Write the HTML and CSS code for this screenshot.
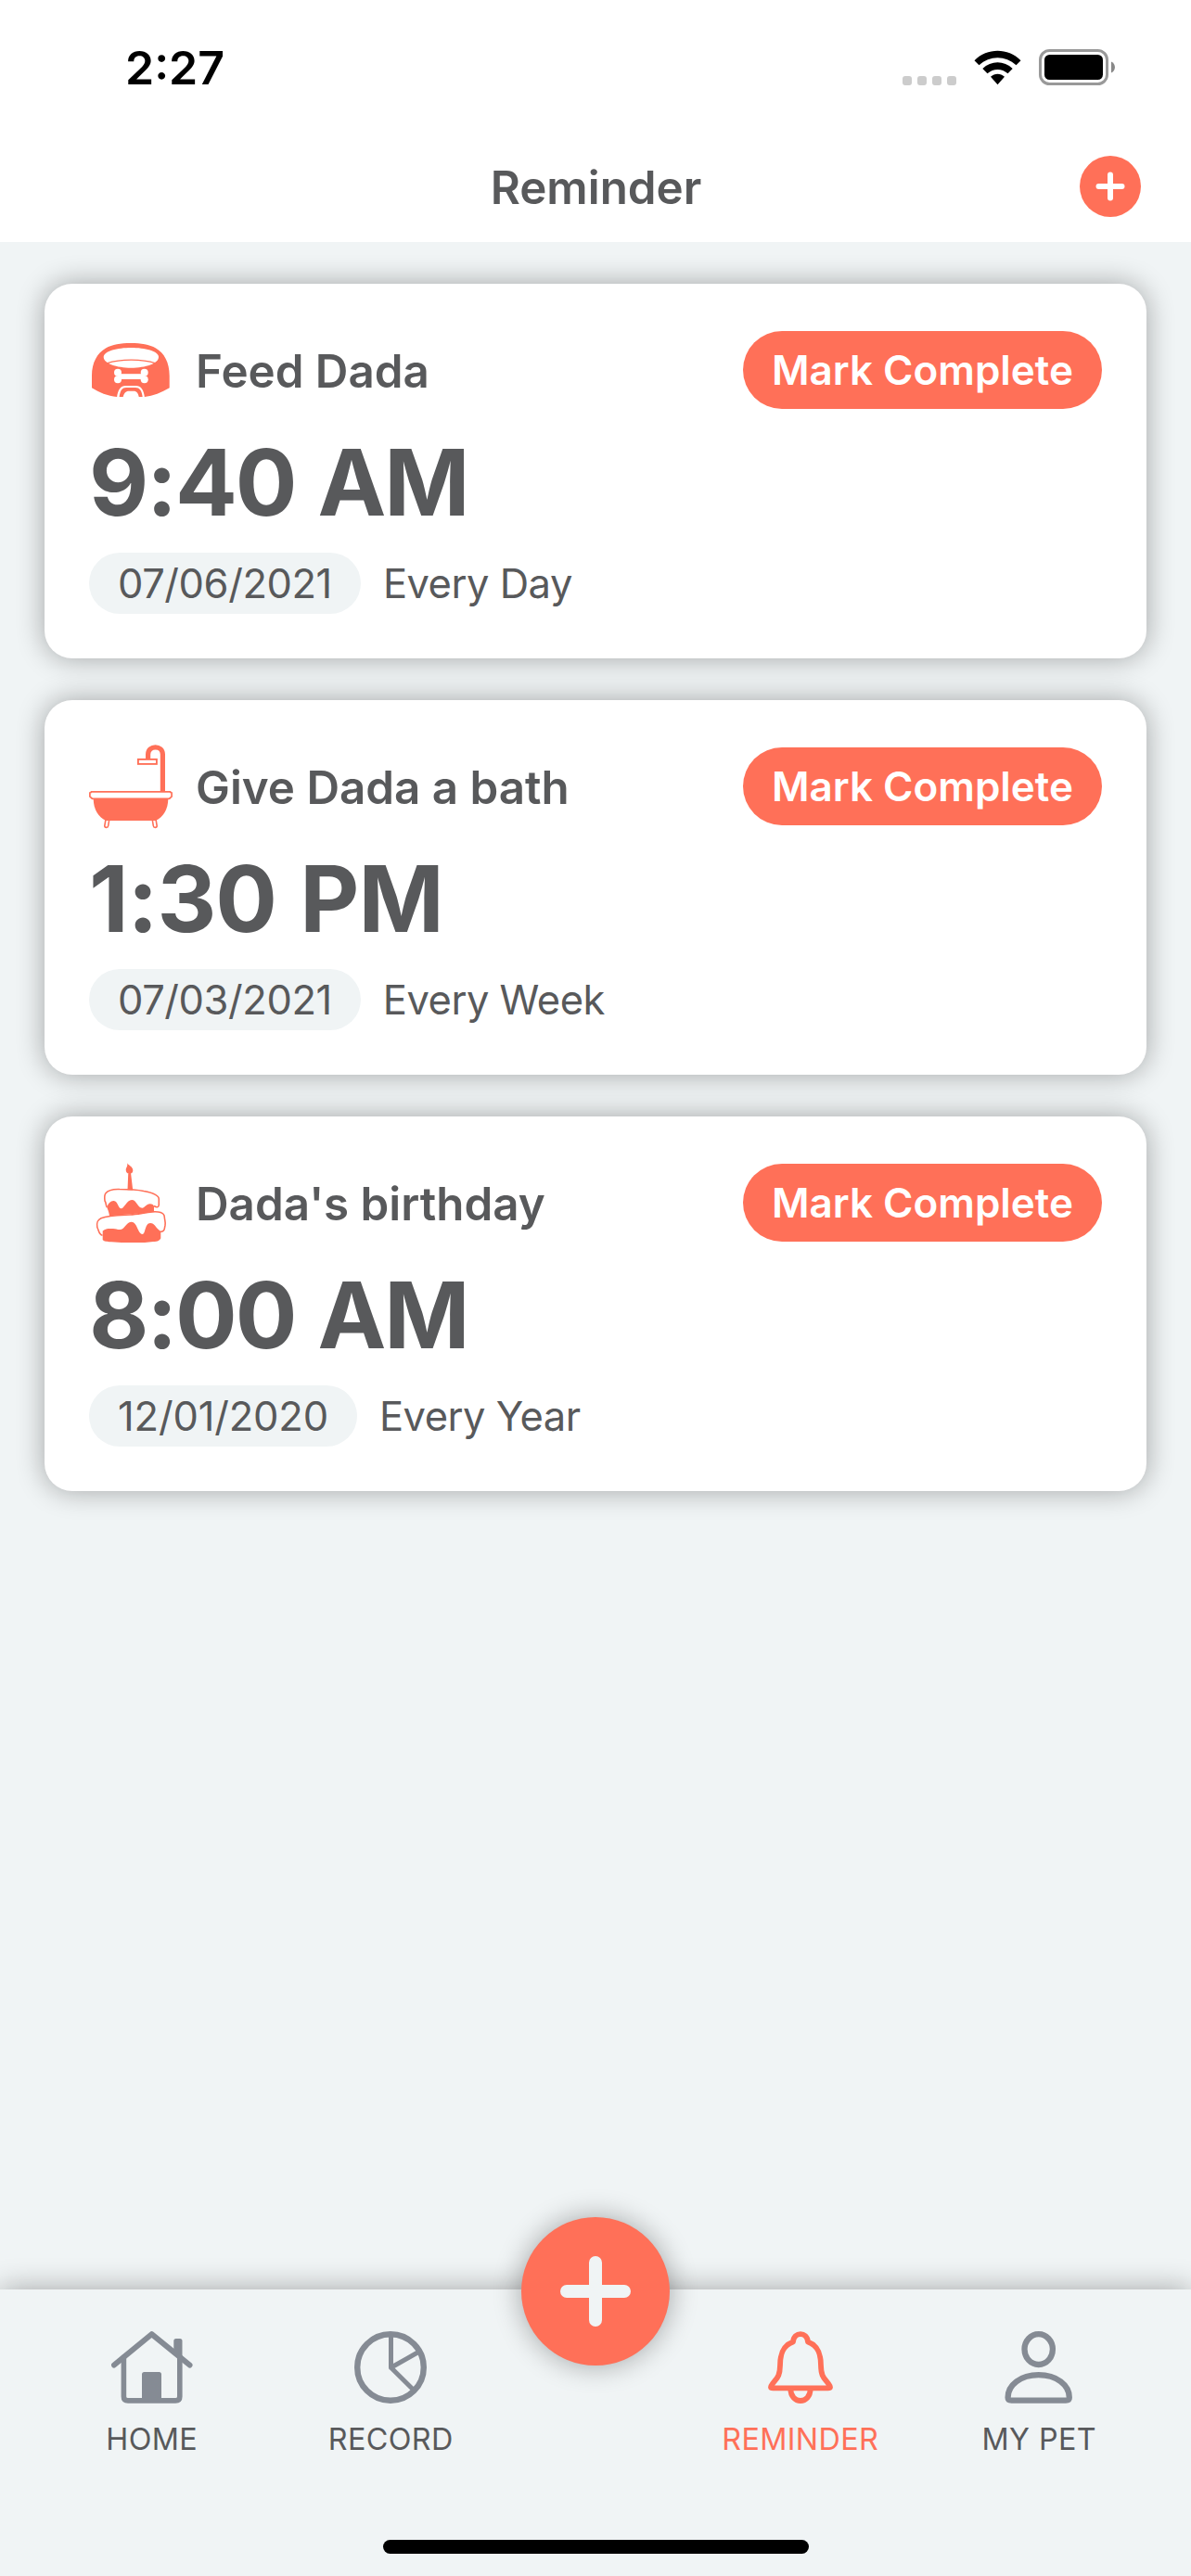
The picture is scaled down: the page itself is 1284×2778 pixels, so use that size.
FILE: index.html
```html
<!DOCTYPE html>
<html lang="en">
<head>
<meta charset="utf-8">
<title>Reminder</title>
<link rel="stylesheet" href="styles.css">
</head>
<body>
<div class="screen">
  <div class="status-bar">
    <span class="clock">2:27</span>
    <div class="status-icons">
      <svg class="signal" width="58" height="38" viewBox="0 0 58 38" fill="#ccc"><rect y="28" width="10" height="10" rx="3"/><rect x="16" y="28" width="10" height="10" rx="3"/><rect x="32" y="28" width="10" height="10" rx="3"/><rect x="48" y="28" width="10" height="10" rx="3"/></svg>
      <svg class="wifi" width="51" height="38" viewBox="0 0 51 38"><path d="M.5 11.2C14.500-2.700 36.500-2.700 50.500 11.200L45.500 16.200C34 5.500 17 5.500 5.500 16.200ZM9.300 20C18.500 11 32.500 11 41.700 20L36.500 25.200C30 19.500 21 19.500 14.500 25.200ZM18 28.700C22.500 24.800 28.500 24.800 33 28.700L25.500 37.300Z"/></svg>
      <svg class="battery" width="83" height="39" viewBox="0 0 83 39"><rect x="1.500" y="1.500" width="72" height="36" rx="10" fill="none" stroke="#999" stroke-width="3"/><rect x="6" y="6" width="63" height="27" rx="5.500"/><path d="M78 13.500C83.300 15.500 83.300 23.500 78 25.500Z" fill="#888"/></svg>
    </div>
  </div>

  <header class="header">
    <h1 class="header-title">Reminder</h1>
    <button class="add-button" aria-label="Add"><svg width="66" height="66" viewBox="0 0 66 66" fill="none" stroke="#fff" stroke-width="6" stroke-linecap="round"><path d="M33 20.500V45.500M20.500 33H45.500"/></svg></button>
  </header>

  <main class="list">
    <article class="card">
      <div class="card-head">
        <svg class="card-icon" viewBox="0 0 90 90">
          <path fill="#ff7058" d="M3 64.300V51C3 37 9 26.500 18 21.500C25 17.500 34 16 45 16S65 17.500 72 21.500C81 26.500 86.700 37 86.700 51V64.300C78 69.500 69 73 60 74H30C20 73 11 69.500 3 64.300Z"/>
          <path fill="#fff" d="M45.300 21C60 21 75 24.500 75 31C75 38 61 42.700 45.300 42.700S15.700 38 15.700 31C15.700 24.500 31 21 45.300 21Z"/>
          <path fill="none" stroke="#ff7058" stroke-width="1.300" d="M19 37.800C34 32.900 57 32.900 72 37.800"/>
          <g fill="#fff"><circle cx="31" cy="47.700" r="4"/><circle cx="31" cy="55.300" r="4"/><circle cx="59.700" cy="47.700" r="4"/><circle cx="59.700" cy="55.300" r="4"/><path d="M31 49.200H60V55H31Z"/><path d="M30 75C31 66 34 62 39.500 62H50.500C56 62 59 66 60 75H57.800C57 67 54.500 63.900 50 63.900H40C35.500 63.900 33.500 67 32.500 75ZM36.500 75C37.500 70 39.500 67.700 43 67.700H48C51.500 67.700 53 70 54 75Z"/></g>
        </svg>
        <h2 class="card-title">Feed Dada</h2>
        <button class="complete">Mark Complete</button>
      </div>
      <div class="time">9:40 AM</div>
      <div class="meta"><span class="date">07/06/2021</span><span class="repeat">Every Day</span></div>
    </article>

    <article class="card">
      <div class="card-head">
        <svg class="card-icon" viewBox="0 0 90 90">
          <path fill="none" stroke="#ff7058" stroke-width="5.200" d="M63.600 15.500V10.500C63.600 .200 79.400 .200 79.400 10.500V51"/>
          <rect x="52.900" y="15.900" width="20" height="5" fill="#fff" stroke="#ff7058" stroke-width="1.900"/>
          <g fill="#fff" stroke="#ff7058" stroke-width="1.600"><path d="M18 80.500L16.800 87.500C16.800 90 20.400 90 20.700 87.500L21.800 80.500ZM72 80.500L73.200 87.500C73.200 90 69.600 90 69.300 87.500L68.200 80.500Z"/></g>
          <path fill="#ff7058" d="M4.700 58H85.300C85.300 70 80 78 72 82H18C10 78 4.700 70 4.700 58Z"/>
          <path fill="#fff" stroke="#ff7058" stroke-width="1.700" d="M2.500 50.800H87.500C87.500 51.900 89.100 52 89.100 52V56C87.500 57 87.300 58.400 86 58.400H4C2.700 58.400 2.500 57 .900 56V52C.900 52 2.500 51.900 2.500 50.800Z"/>
        </svg>
        <h2 class="card-title">Give Dada a bath</h2>
        <button class="complete">Mark Complete</button>
      </div>
      <div class="time time-narrow">1:30 PM</div>
      <div class="meta"><span class="date">07/03/2021</span><span class="repeat">Every Week</span></div>
    </article>

    <article class="card">
      <div class="card-head">
        <svg class="card-icon" viewBox="0 8 90 90">
          <path fill="#ff7058" d="M41 10C42 12.500 47.300 14 47.300 18C47.300 21 45.500 21.700 43.500 21.700S39.700 20.500 39.700 17.500C39.700 15 42.200 14 41 10ZM42.300 20.500H45L47.200 39.500L41.500 39.200Z"/>
          <path fill="#ff7058" d="M19.300 58C20.500 53.500 24 50.300 27.500 51.200C31 52 31.500 59 34.500 59.300C38 59.500 40.500 50 46 50S52 58.500 57.300 58.700C60 58.700 61.500 54.300 65.700 54.200C68 54.200 70 55.500 70 57V63L22 67.200C21.500 63 20 60 19.300 58Z"/>
          <path fill="none" stroke="#ff7058" stroke-width="1.600" d="M19.500 58C17.500 55.500 19 54 17 51C16.500 47 16.500 44.500 18 42.800C21 39 26 38.200 33 38.500C42 38.500 51 38.800 59 40.500C68 42.200 75.300 45 75.300 49V55.500C75 58 73 58.500 70 56.500"/>
          <path fill="none" stroke="#ff7058" stroke-width="1.600" d="M14.500 88.200C10.500 87.500 11 84 8.800 79.500C8 74 9 71.500 13 69.700C21 66.500 33 66.500 44 66C53 65.500 60 63.500 68 62.900C75 62.500 81 63 81.300 68.500C81.500 72 82.700 74 82 77.500C81 81 82 84.500 76.500 84.500"/>
          <path fill="#ff7058" d="M14.700 93V83.500C18 80.500 21 81 26 81C30 81 31.500 83 35.500 81.500C39 80 41 73.800 45.700 73.800C52 73.800 52.500 86.500 57.500 87C61 87 60 75 66 75C71 75 71 79.500 77.300 84V91.500C75.500 94.500 73 95 67 95.200L60 96H35L24 95.200C18 95 17 95 14.700 93Z"/>
        </svg>
        <h2 class="card-title">Dada's birthday</h2>
        <button class="complete">Mark Complete</button>
      </div>
      <div class="time">8:00 AM</div>
      <div class="meta"><span class="date date-short">12/01/2020</span><span class="repeat">Every Year</span></div>
    </article>
  </main>

  <nav class="tab-bar">
    <a class="tab">
      <svg width="88" height="78" viewBox="0 0 88 78" fill="none" stroke="#858b94" stroke-width="5.600" stroke-linecap="round" stroke-linejoin="round"><path stroke-width="6" d="M3 36.500L43.500 3.200L84.500 36.500"/><path d="M13.400 28V70.500Q13.400 74.900 18 74.900H69.200Q73.800 74.900 73.800 70.500V28"/><path fill="#858b94" stroke="none" d="M33 76V46.500Q33 44 35.500 44H51.500Q54 44 54 46.500V76ZM67.300 20V10.500Q67.300 8 69.800 8H74Q76.500 8 76.500 10.500V31Z"/></svg>
      <span>HOME</span>
    </a>
    <a class="tab">
      <svg width="78" height="78" viewBox="0 0 78 78" fill="none" stroke="#858b94" stroke-width="5"><circle cx="39" cy="39" r="35.800" stroke-width="6.400"/><path stroke-linejoin="round" d="M39.500 4V39.300L69.500 22.300M39.500 39.300L64.500 64"/></svg>
      <span>RECORD</span>
    </a>
    <a class="tab tab-right tab-active">
      <svg width="70" height="78" viewBox="0 0 70 78" fill="none" stroke="#ff7058" stroke-width="5.800" stroke-linejoin="round"><path d="M27 11.500C28 0.300 42 0.300 43 11.500C54 15.500 57 24.500 57 37C57.200 49 60.500 50.500 65 56.500C68 60.500 67.500 61.300 64.500 61.300H5.500C2.500 61.300 2 60.500 5 56.500C9.500 50.500 12.800 49 13 37C13 24.500 16 15.500 27 11.500Z"/><path d="M24.300 62C24.300 79.300 45.700 79.300 45.700 62"/></svg>
      <span>REMINDER</span>
    </a>
    <a class="tab">
      <svg width="74" height="78" viewBox="0 0 74 78" fill="none" stroke="#858b94" stroke-width="6.300"><ellipse cx="36.700" cy="19.600" rx="15.200" ry="16.400"/><path d="M7.500 74.600H66Q69.800 74.600 69.800 71.500C69.800 58 56 47.200 36.700 47.200S3.600 58 3.600 71.500Q3.600 74.600 7.500 74.600Z"/></svg>
      <span>MY PET</span>
    </a>
    <button class="fab" aria-label="New record"><svg width="160" height="160" viewBox="0 0 160 160" fill="none" stroke="#f0f4f5" stroke-width="14" stroke-linecap="round"><path d="M80 49V111M49 80H111"/></svg></button>
    <div class="home-indicator"></div>
  </nav>
</div>
</body>
</html>
```
FILE: styles.css
```css
* { box-sizing: border-box; margin: 0; padding: 0; }

body {
  font-family: Inter, "Liberation Sans", sans-serif;
  color: #58595b;
  background: #f0f4f5;
}

button { border: 0; font: inherit; }
svg { display: block; flex: none; }

.screen {
  width: 1284px;
  height: 2778px;
  display: flex;
  flex-direction: column;
  overflow: hidden;
}

.status-bar {
  height: 141px;
  padding: 5px 81px 0 135px;
  display: flex;
  align-items: center;
  justify-content: space-between;
  background: #fff;
  color: #000;
}
.clock { font-size: 50px; font-weight: 600; }
.status-icons { display: flex; align-items: center; margin-top: -1px; }
.wifi { margin-left: 19px; }
.battery { margin-left: 19px; }

.header {
  height: 120px;
  padding: 0 54px;
  display: grid;
  grid-template-columns: 1fr auto 1fr;
  align-items: center;
  background: #fff;
}
.header-title {
  grid-column: 2;
  padding: 2px 0 0 1px;
  font-size: 49.3px;
  font-weight: 600;
  line-height: 60px;
}
.add-button {
  justify-self: end;
  width: 66px;
  height: 66px;
  border-radius: 50%;
  background: #ff7058;
}

.list {
  flex: 1;
  padding: 45px 48px;
  display: flex;
  flex-direction: column;
  gap: 45px;
}
.card {
  height: 404px;
  padding: 48px;
  border-radius: 30px;
  background: #fff;
  box-shadow: 0 0 30px rgba(0, 0, 0, .33);
}
.card-head { height: 90px; display: flex; align-items: center; }
.card-icon { width: 90px; height: 90px; overflow: visible; }
.card-title {
  flex: 1;
  margin-left: 25px;
  padding-top: 1px;
  font-size: 49.3px;
  font-weight: 600;
  line-height: 60px;
}
.complete {
  height: 84px;
  padding: 0 31px;
  border-radius: 42px;
  background: #ff7058;
  color: #fff;
  font-size: 44px;
  font-weight: 600;
}
.time {
  font-size: 99px;
  font-weight: 700;
  line-height: 152px;
  letter-spacing: -2.2px;
  word-spacing: 3px;
}
.time-narrow { letter-spacing: -1.1px; }
.meta {
  display: flex;
  align-items: center;
  gap: 24px;
  font-size: 43.5px;
  line-height: 66px;
}
.date {
  padding: 0 31px;
  border-radius: 33px;
  background: #f0f4f5;
  letter-spacing: -.43px;
}
.date-short { letter-spacing: -.17px; }
.repeat { letter-spacing: -.5px; }

.tab-bar {
  position: relative;
  height: 309px;
  padding: 45px 35px 0;
  display: flex;
  background: #f0f4f5;
  box-shadow: 0 0 30px rgba(0, 0, 0, .33);
}
.tab {
  width: 257.5px;
  display: flex;
  flex-direction: column;
  align-items: center;
  gap: 19px;
  font-size: 32.3px;
  line-height: 40px;
  letter-spacing: .4px;
}
.tab-right { margin-left: 184px; }
.tab-active { color: #ff7058; }

.fab {
  position: absolute;
  left: 562px;
  top: -78px;
  width: 160px;
  height: 160px;
  border-radius: 50%;
  background: #ff7058;
  box-shadow: 0 0 30px rgba(0, 0, 0, .33);
}
.home-indicator {
  position: absolute;
  left: 413px;
  bottom: 24px;
  width: 459px;
  height: 15px;
  border-radius: 8px;
  background: #000;
}
```
